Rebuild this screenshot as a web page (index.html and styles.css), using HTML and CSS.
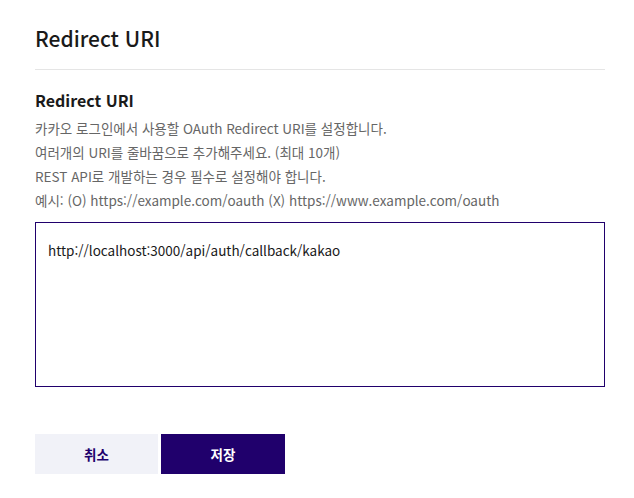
FILE: index.html
```html
<!DOCTYPE html>
<html lang="ko">
<head>
<meta charset="utf-8">
<link rel="stylesheet" href="styles.css">
</head>
<body>
<div class="page">
  <h1 class="title">Redirect URI</h1>
  <hr class="divider">
  <h2 class="section-title">Redirect URI</h2>
  <div class="desc">
    <p>카카오 로그인에서 사용할 OAuth Redirect URI를 설정합니다.</p>
    <p>여러개의 URI를 줄바꿈으로 추가해주세요. (최대 10개)</p>
    <p>REST API로 개발하는 경우 필수로 설정해야 합니다.</p>
    <p>예시: (O) https://example.com/oauth (X) https://www.example.com/oauth</p>
  </div>
  <textarea class="uri-input">http://localhost:3000/api/auth/callback/kakao</textarea>
  <div class="actions">
    <button class="btn btn-cancel">취소</button>
    <button class="btn btn-save">저장</button>
  </div>
</div>
</body>
</html>
```

FILE: styles.css
```css
* { box-sizing: border-box; }
html, body { margin: 0; padding: 0; background: #fff; }
body {
  font-family: "Noto Sans CJK KR", "Noto Sans", sans-serif;
  color: #1a1a1a;
}
.page {
  width: 570px;
  margin-left: 35px;
  padding-top: 23px;
}
.title {
  margin: 0;
  font-size: 21px;
  font-weight: 500;
  line-height: 31px;
  color: #1a1a1a;
}
.divider {
  margin: 15px 0 0;
  border: 0;
  border-top: 1px solid #e5e5e5;
  height: 0;
}
.section-title {
  margin: 18px 0 0;
  font-size: 16px;
  font-weight: 700;
  line-height: 24px;
}
.desc { margin-top: 4px; }
.desc p {
  margin: 0;
  font-size: 13.5px;
  line-height: 24px;
  color: #666;
}
.uri-input {
  display: block;
  margin-top: 10px;
  width: 570px;
  height: 165px;
  border: 1px solid #20006c;
  border-radius: 0;
  padding: 16px 12px;
  font-family: "Noto Sans CJK KR", "Noto Sans", sans-serif;
  font-size: 13.5px;
  line-height: 22px;
  color: #1a1a1a;
  resize: none;
  outline: none;
}
.actions {
  display: flex;
  gap: 3px;
  margin-top: 47px;
}
.btn {
  width: 123px;
  height: 40px;
  border: 0;
  border-radius: 0;
  font-family: "Noto Sans CJK KR", "Noto Sans", sans-serif;
  font-size: 13.5px;
  font-weight: 700;
  cursor: pointer;
}
.btn-cancel { background: #f1f2f8; color: #20006c; }
.btn-save { background: #20006c; color: #fff; width: 124px; }
```
